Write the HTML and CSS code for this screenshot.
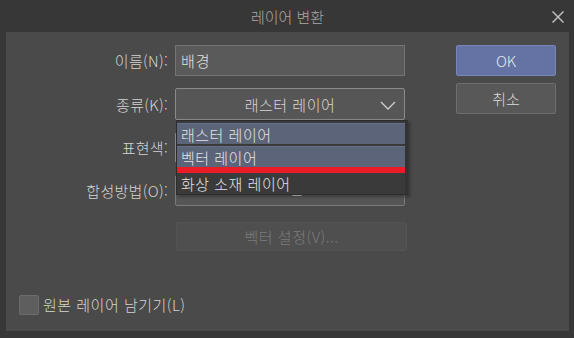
FILE: index.html
```html
<!DOCTYPE html>
<html lang="ko">
<head>
    <meta charset="UTF-8">
    <title>레이어 변환</title>
    <link rel="stylesheet" href="styles.css">
</head>
<body>
    <div class="window">
        <div class="titlebar">
            <span class="title">레이어 변환</span>
            <span class="close">
                <svg width="12" height="12" viewBox="0 0 12 12">
                    <path d="M0.5 0.5 L11.5 11.5 M11.5 0.5 L0.5 11.5" stroke="#bdbdbd" stroke-width="1.5" fill="none"/>
                </svg>
            </span>
        </div>
        <div class="panel">
            <div class="main">
                <div class="form">
                    <div class="label">이름(N):</div>
                    <div class="input">배경</div>

                    <div class="label">종류(K):</div>
                    <div class="select-wrap">
                        <div class="select">
                            <span>래스터 레이어</span>
                            <svg class="chevron" width="16" height="9" viewBox="0 0 16 9">
                                <path d="M1 1 L8 8 L15 1" stroke="#cfcfcf" stroke-width="1.3" fill="none"/>
                            </svg>
                        </div>
                        <div class="dropdown">
                            <div class="item active">래스터 레이어</div>
                            <div class="item active">벡터 레이어</div>
                            <div class="marker"></div>
                            <div class="item">화상 소재 레이어</div>
                        </div>
                    </div>

                    <div class="label">표현색:</div>
                    <div class="select"></div>

                    <div class="label">합성방법(O):</div>
                    <div class="select low">표준</div>

                    <div class="label"></div>
                    <div class="btn disabled">벡터 설정(V)...</div>
                </div>
                <div class="buttons">
                    <div class="btn primary">OK</div>
                    <div class="btn">취소</div>
                </div>
            </div>
            <div class="keep">
                <span class="check"></span>
                <span>원본 레이어 남기기(L)</span>
            </div>
        </div>
    </div>
</body>
</html>
```

FILE: styles.css
```css
* {
    padding: 0px;
    margin: 0px;
    box-sizing: border-box;
}
body {
    width: 574px;
    height: 338px;
    background-color: #333333;
    font-family: "Noto Sans CJK KR", "Noto Sans", sans-serif;
    font-size: 15px;
    font-weight: 300;
    color: #d2d2d2;
    overflow: hidden;
}
.window {
    height: 338px;
    background-color: #373737;
    padding: 0px 5px 7px 6px;
    display: flex;
    flex-direction: column;
}
.titlebar {
    height: 32px;
    display: flex;
    align-items: center;
    justify-content: center;
    position: relative;
}
.title {
    color: #a9a9a9;
    font-size: 15px;
}
.close {
    position: absolute;
    right: 5px;
    top: 11px;
    width: 12px;
    height: 12px;
    display: flex;
}
.panel {
    flex: 1;
    background-color: #4a4a4a;
    display: flex;
    flex-direction: column;
    padding: 13px 0px 16px 13px;
}
.main {
    display: flex;
    gap: 51px;
}
.form {
    display: grid;
    grid-template-columns: 149px 230px;
    grid-template-rows: 31px 32px 31px 31px 29px;
    column-gap: 7px;
    row-gap: 12px;
}
.label {
    display: flex;
    align-items: center;
    justify-content: flex-end;
    color: #d4d4d4;
    letter-spacing: 0.3px;
}
.input {
    background-color: #5a5a5a;
    border: 1px solid #747474;
    display: flex;
    align-items: center;
    padding-left: 5px;
    color: #e0e0e0;
    letter-spacing: 1px;
}
.select-wrap {
    position: relative;
}
.select {
    height: 100%;
    background-color: #565656;
    border: 1px solid #8a8a8a;
    border-radius: 2px;
    display: flex;
    align-items: center;
    justify-content: center;
    position: relative;
    color: #d8d8d8;
    letter-spacing: 0.5px;
}
.select.low {
    align-items: flex-end;
    padding-bottom: 6px;
    border-color: #7a7a7a;
}
.chevron {
    position: absolute;
    right: 8px;
    top: 12px;
}
.dropdown {
    position: absolute;
    top: 32px;
    left: 1px;
    width: 232px;
    height: 75px;
    background-color: #3a3a3a;
    border: 1px solid #2c2c2c;
    border-right: 3px solid #333333;
    padding: 2px 0px 0px 0px;
    box-shadow: 2px 2px 3px rgba(0, 0, 0, 0.3);
    z-index: 2;
}
.item {
    height: 21px;
    padding-left: 4px;
    display: flex;
    align-items: center;
    color: #e4e4e4;
    font-size: 15px;
    letter-spacing: 0.5px;
}
.item.active {
    background-color: #5b6479;
    margin-bottom: 2px;
    border-top: 1px solid #66708a;
}
.item.active:nth-child(2) {
    margin-bottom: 0px;
}
.marker {
    height: 6px;
    background-color: #ea1c27;
}
.btn {
    display: flex;
    align-items: center;
    justify-content: center;
    background-color: #585858;
    border: 1px solid #6e6e6e;
    border-radius: 2px;
    color: #dcdcdc;
    height: 30px;
}
.btn.disabled {
    margin-top: 4px;
    height: 29px;
    margin-left: 1px;
    width: 231px;
    background-color: #4f4f4f;
    border-color: #535353;
    color: #7c7c7c;
    letter-spacing: 0.5px;
}
.buttons {
    width: 100px;
    display: flex;
    flex-direction: column;
    gap: 7px;
}
.buttons .btn {
    height: 31px;
}
.btn.primary {
    background-color: #6473a3;
    border-color: #7886b7;
    color: #e6e9f2;
}
.keep {
    margin-top: auto;
    display: flex;
    align-items: center;
    gap: 4px;
    color: #d4d4d4;
    letter-spacing: 0.5px;
}
.check {
    width: 20px;
    height: 20px;
    background-color: #5e5e5e;
    border: 1px solid #6c6c6c;
    border-radius: 2px;
}
```
